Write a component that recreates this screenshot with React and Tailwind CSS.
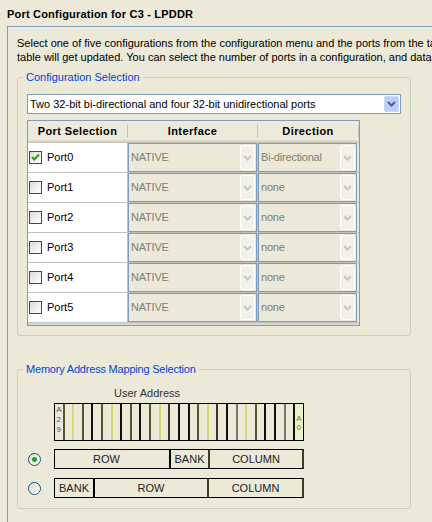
import React from "react";

const Chevron = ({ color }) => (
  <svg width="9" height="6" viewBox="0 0 9 6">
    <path d="M1 1 L4.5 4.5 L8 1" fill="none" stroke={color} strokeWidth="2" />
  </svg>
);

const Checkbox = ({ checked }) => (
  <div className="w-[13px] h-[13px] border border-[#1C5180] bg-gradient-to-br from-[#DCDCD7] to-white flex items-center justify-center shrink-0">
    {checked && (
      <svg width="11" height="11" viewBox="0 0 11 11">
        <path d="M2 5 L4.3 7.5 L9 2.5" fill="none" stroke="#21A121" strokeWidth="2" />
      </svg>
    )}
  </div>
);

const Radio = ({ checked }) => (
  <div className="w-[13px] h-[13px] rounded-full border border-[#1C5180] bg-gradient-to-br from-[#DCDCD7] to-white flex items-center justify-center shrink-0">
    {checked && <div className="w-[5px] h-[5px] rounded-full bg-[#21A121]" />}
  </div>
);

const DisabledCombo = ({ text, w }) => (
  <div className={`${w} h-[29px] border border-[#7F9DB9] bg-[#ECE9D8] flex items-center`}>
    <span className="pl-[2px] text-[#808070] tracking-[-0.2px]">{text}</span>
    <div className="ml-auto mr-[1px] w-[15px] h-[25px] rounded-[2px] bg-[#F2F1EA] border border-white flex items-center justify-center">
      <Chevron color="#C9C7BA" />
    </div>
  </div>
);

const ports = [
  { name: "Port0", checked: true, dir: "Bi-directional" },
  { name: "Port1", checked: false, dir: "none" },
  { name: "Port2", checked: false, dir: "none" },
  { name: "Port3", checked: false, dir: "none" },
  { name: "Port4", checked: false, dir: "none" },
  { name: "Port5", checked: false, dir: "none" },
];

const dividerColors = [
  "#55552F", "#D8D878", "#55552F", "#111111", "#55552F", "#D8D878", "#111111", "#55552F", "#111111",
  "#55552F", "#D8D878", "#333333", "#111111", "#111111", "#55552F", "#D8D878", "#333333", "#111111",
  "#777766", "#D8D878", "#55552F", "#111111", "#111111", "#777766", "#111111",
];

export default function App() {
  return (
    <div className="w-[432px] h-[522px] overflow-hidden bg-[#ECE9D8] font-['Liberation_Sans',Arial,sans-serif] text-[11px] text-black">
      <div className="pl-[7px] pt-[7px] h-[26px] leading-[14px] tracking-[0.2px] font-bold whitespace-nowrap">
        Port Configuration for C3 - LPDDR
      </div>
      <div className="ml-[7px] w-[440px] h-[600px] border-l border-t border-[#7F9DB9] pl-[9px] pt-[9px]">
        <p className="leading-[14px] whitespace-nowrap">
          Select one of five configurations from the configuration menu and the ports from the table
          <br />
          table will get updated. You can select the number of ports in a configuration, and data
        </p>

        <fieldset className="mt-[6px] w-[394px] border border-[#D0D0BF] rounded-[3px] px-[9px] pb-[9px]">
          <legend className="-ml-[4px] px-[3px] leading-[14px] text-[#0046D5]">Configuration Selection</legend>
          <div className="mt-[10px] w-[374px] h-[20px] border border-[#7F9DB9] bg-white flex items-center">
            <span className="pl-[2px] whitespace-nowrap">Two 32-bit bi-directional and four 32-bit unidirectional ports</span>
            <div className="ml-auto mr-[1px] w-[15px] h-[16px] rounded-[2px] bg-[#BBCDF8] border border-[#C8D7FA] flex items-center justify-center">
              <Chevron color="#4D6185" />
            </div>
          </div>

          <div className="mt-[6px] w-[333px] border border-[#7F9DB9] pb-[2px] bg-[#D8D8D0]">
            <div className="h-[22px] flex bg-[#EBEADB] font-bold tracking-[0.4px] shadow-[inset_0_-1px_0_#CBC7B8,inset_0_-2px_0_#D6D2C2,inset_0_-3px_0_#E2DFD0]">
              <div className="w-[100px] flex items-center">
                <span className="flex-1 text-center pb-[2px]">Port Selection</span>
                <div className="w-px h-[14px] bg-[#C7C5B2] mb-[2px]" />
              </div>
              <div className="w-[130px] flex items-center">
                <span className="flex-1 text-center pb-[2px]">Interface</span>
                <div className="w-px h-[14px] bg-[#C7C5B2] mb-[2px]" />
              </div>
              <div className="flex-1 flex items-center">
                <span className="flex-1 text-center pb-[2px]">Direction</span>
                <div className="w-px h-[14px] bg-[#C7C5B2] mb-[2px]" />
              </div>
            </div>
            {ports.map((p) => (
              <div key={p.name} className="h-[30px] flex border-b border-[#C0C0C0]">
                <div className="w-[100px] bg-white border-r border-[#C0C0C0] flex items-center pl-[1px]">
                  <Checkbox checked={p.checked} />
                  <span className="ml-[5px]">{p.name}</span>
                </div>
                <div className="w-[130px] border-r border-[#C0C0C0]">
                  <DisabledCombo text="NATIVE" w="w-[129px]" />
                </div>
                <div className="flex-1 bg-[#ECE9D8]">
                  <DisabledCombo text={p.dir} w="w-[99px]" />
                </div>
              </div>
            ))}
          </div>
        </fieldset>

        <fieldset className="mt-[26px] w-[394px] border border-[#D0D0BF] rounded-[3px] px-[10px] pb-[10px]">
          <legend className="-ml-[5px] px-[3px] leading-[14px] text-[#0046D5] tracking-[-0.2px]">Memory Address Mapping Selection</legend>
          <div className="mt-[10px] ml-[86px] leading-[14px] text-[#333333]">User Address</div>
          <div className="mt-[3px] ml-[26px] w-[250px] h-[38px] border border-black flex">
            <div className="flex-1 flex flex-col items-center pt-[1px] text-[8px] leading-[10px] text-[#555555]">
              <span>A</span>
              <span>2</span>
              <span>9</span>
            </div>
            {dividerColors.map((c, i) => (
              <div
                key={i}
                className={`flex-1 border-l-2 ${i === 24 ? "bg-[#EFEFC8] flex flex-col items-center pt-[10px] text-[8px] leading-[9px] text-[#77772A]" : ""}`}
                style={{ borderLeftColor: c }}
              >
                {i === 24 && (
                  <>
                    <span>A</span>
                    <span>0</span>
                  </>
                )}
              </div>
            ))}
          </div>

          <div className="mt-[8px] flex items-center gap-[13px] text-[#222222]">
            <Radio checked />
            <div className="w-[250px] h-[20px] border border-black border-r-2 border-r-[#3D3D1F] flex">
              <div className="w-[114px] flex items-center justify-center pr-[11px]">ROW</div>
              <div className="w-[39px] border-l-2 border-black flex items-center justify-center">BANK</div>
              <div className="flex-1 border-l-2 border-[#3D3D1F] flex items-center justify-center">COLUMN</div>
            </div>
          </div>
          <div className="mt-[9px] flex items-center gap-[13px] text-[#222222]">
            <Radio />
            <div className="w-[250px] h-[20px] border border-black border-r-2 border-r-[#3D3D1F] flex">
              <div className="w-[38px] flex items-center justify-center">BANK</div>
              <div className="w-[114px] border-l-2 border-black flex items-center justify-center">ROW</div>
              <div className="flex-1 border-l-2 border-[#3D3D1F] flex items-center justify-center">COLUMN</div>
            </div>
          </div>
        </fieldset>
      </div>
    </div>
  );
}
